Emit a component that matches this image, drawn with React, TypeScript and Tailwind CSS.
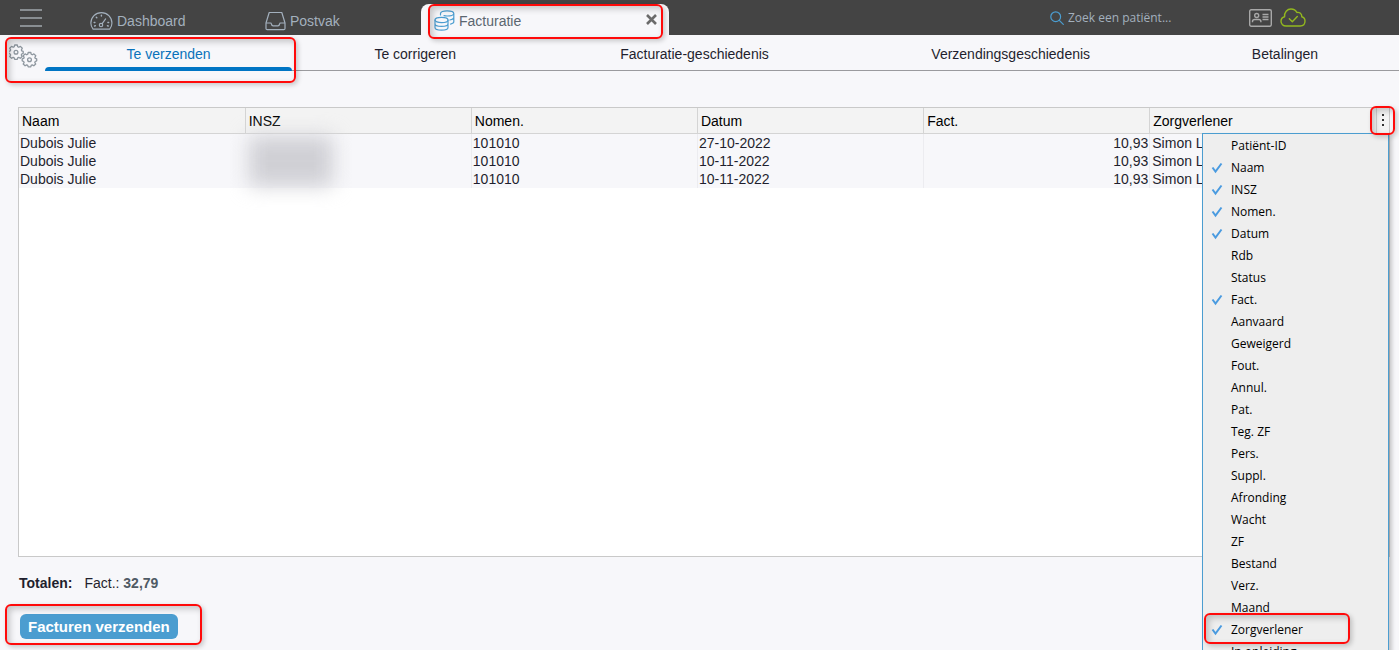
import React, { useState } from "react";

const COLUMNS = ["Naam", "INSZ", "Nomen.", "Datum", "Fact.", "Zorgverlener"];

const ROWS = [
  { naam: "Dubois Julie", nomen: "101010", datum: "27-10-2022", fact: "10,93", zorg: "Simon L" },
  { naam: "Dubois Julie", nomen: "101010", datum: "10-11-2022", fact: "10,93", zorg: "Simon L" },
  { naam: "Dubois Julie", nomen: "101010", datum: "10-11-2022", fact: "10,93", zorg: "Simon L" },
];

const MENU_ITEMS = [
  "Patiënt-ID", "Naam", "INSZ", "Nomen.", "Datum", "Rdb", "Status", "Fact.",
  "Aanvaard", "Geweigerd", "Fout.", "Annul.", "Pat.", "Teg. ZF", "Pers.",
  "Suppl.", "Afronding", "Wacht", "ZF", "Bestand", "Verz.", "Maand",
  "Zorgverlener", "In opleiding",
];

const SUB_TABS = [
  "Te verzenden", "Te corrigeren", "Facturatie-geschiedenis",
  "Verzendingsgeschiedenis", "Betalingen",
];

function Highlight({ className }: { className: string }) {
  return (
    <span
      aria-hidden="true"
      className={`pointer-events-none absolute z-30 rounded-md border-2 border-[#ff0a0a] shadow-[2px_2px_5px_rgba(0,0,0,0.2),inset_3px_3px_6px_rgba(0,0,0,0.2)] ${className}`}
    />
  );
}

function GaugeIcon() {
  return (
    <svg width="23" height="20" viewBox="0 0 24 20" fill="none" stroke="currentColor" strokeWidth="1.2" strokeLinecap="round" strokeLinejoin="round">
      <path d="M3.2 18.4C1.7 16.7.9 14.5.9 12.2.9 6.1 5.800 1.200 11.900 1.200S22.900 6.100 22.900 12.200c0 2.300-.8 4.500-2.300 6.200z" />
      <circle cx="11.500" cy="14.200" r="1.800" />
      <path d="M12.700 12.700 16.300 7.800" />
      <path strokeWidth="1.500" d="M11.900 4v.8M6.600 6.200l.5.5M4.300 11.500l.8.100M19.500 11.500l-.8.100M4.800 15.200l.8-.2M19 15.200l-.8-.2" />
    </svg>
  );
}

function TrayIcon() {
  return (
    <svg width="21" height="20" viewBox="0 0 21 20" fill="none" stroke="currentColor" strokeWidth="1.2" strokeLinejoin="round">
      <path d="M4.200 1.500h12.600l3.200 10.500v5.500q0 1.200-1.200 1.200H2.200Q1 18.700 1 17.500V12z" />
      <path d="M1 12h4.500q.8 0 .9.900.3 2 1.700 2h4.800q1.400 0 1.700-2 .1-.9.900-.9H20" />
    </svg>
  );
}

function CoinsIcon() {
  return (
    <svg width="21" height="21" viewBox="0 0 21 21" fill="none" stroke="currentColor" strokeWidth="1.2" strokeLinecap="round">
      <ellipse cx="7.500" cy="10" rx="6.500" ry="2.600" />
      <path d="M1 10v7.500c0 1.500 2.900 2.700 6.500 2.700S14 19 14 17.500V10M1 13.700c0 1.500 2.900 2.700 6.500 2.700s6.500-1.200 6.500-2.700" />
      <path d="M6.500 5V3.500C6.500 2 9.400.9 13 .9s6.800 1.100 6.800 2.600S16.800 6 13.200 6c-1.200 0-2.300-.1-3.200-.4M19.800 3.500v8.300c0 1-1.300 1.800-3.200 2.300M19.800 7.600c0 1.200-1.500 2-3.900 2.400" />
    </svg>
  );
}

function Gear({ x, y }: { x: number; y: number }) {
  return (
    <g transform={`translate(${x} ${y})`}>
      <path d="M-1.300-6.500h2.600l.4 1.700 1.100.6 1.600-.9 1.900 1.900-.9 1.600.4 1 1.400.5v1.900l-1.500.7-.4 1 .9 1.600-1.900 1.700-1.600-.9-1 .5-.4 1.500h-2.600l-.5-1.500-1-.5-1.600.9-1.900-1.700.9-1.600-.4-1-1.500-.7V-.1l1.500-.5.4-1-.9-1.600 1.900-1.900 1.600.9 1-.6z" />
      <circle r="1.900" cy=".7" />
    </g>
  );
}

function GearsIcon() {
  return (
    <svg width="29" height="24" viewBox="0 0 29 24" fill="none" stroke="currentColor" strokeWidth="1.3" strokeLinejoin="round">
      <Gear x={7} y={7.5} />
      <Gear x={20.5} y={15} />
    </svg>
  );
}

function CardIcon() {
  return (
    <svg width="23" height="18" viewBox="0 0 23 18" fill="none" stroke="currentColor" strokeWidth="1.4">
      <rect x=".7" y=".7" width="21.600" height="16.600" rx="1.500" />
      <circle cx="7.700" cy="6.500" r="2" />
      <path d="M3.500 13.200v-.7q0-2 2.200-2h4q2.200 0 2.200 2v.7M13.500 5.500h6M13.500 8h6M13.500 10.500h6" />
    </svg>
  );
}

function CloudIcon() {
  return (
    <svg width="26" height="19" viewBox="0 0 26 19" fill="none" stroke="currentColor" strokeWidth="1.4" strokeLinecap="round" strokeLinejoin="round">
      <path d="M6 18C3.200 18 1 16 1 13.300c0-2.300 1.500-4 3.600-4.500C4.100 4.300 7.200 1 11 1c2.700 0 4.800 1.300 5.900 3.500 2.700-.6 5 1.200 4.900 4.200 2 .5 3.200 2.200 3.200 4.300C25 16 23 18 20.200 18z" />
      <path d="m9.300 10.700 3 3 5-5.200" />
    </svg>
  );
}

export default function App() {
  const [checked, setChecked] = useState<string[]>(COLUMNS);
  const toggle = (name: string) =>
    setChecked((c) => (c.includes(name) ? c.filter((n) => n !== name) : [...c, name]));

  return (
    <div className="relative flex h-screen flex-col overflow-hidden bg-[#f7f7fa] font-['Liberation_Sans',Arial,sans-serif] text-sm text-[#1f1f2e]">
      <header className="flex h-[35px] shrink-0 items-stretch bg-[#444444] text-[#a3b0bd]">
        <button aria-label="Menu" className="flex w-[90px] items-center pl-5">
          <svg width="22" height="18" viewBox="0 0 22 18" stroke="#a0a6ac" strokeWidth="1.4">
            <path d="M0 1h22M0 9h22M0 17h22" />
          </svg>
        </button>
        <nav className="flex items-stretch">
          <a href="#dashboard" className="flex w-[175px] items-center gap-1 pt-1.5">
            <GaugeIcon />
            Dashboard
          </a>
          <a href="#postvak" className="flex w-[156px] items-center gap-1 pt-1.5">
            <TrayIcon />
            Postvak
          </a>
          <div className="relative mt-1 flex w-[248px] items-center justify-between rounded-t-lg bg-[#f7f7fa] pr-3 pl-[13px] text-[#5b6670]">
            <a href="#facturatie" className="flex items-center gap-1 pt-0.5">
              <span className="text-[#4b9dd0]"><CoinsIcon /></span>
              Facturatie
            </a>
            <button aria-label="Sluiten">
              <svg width="11" height="11" viewBox="0 0 11 11" stroke="#6b6b6b" strokeWidth="2.6">
                <path d="m1 1 9 9M10 1l-9 9" />
              </svg>
            </button>
            <Highlight className="top-0 right-1.5 -bottom-1 left-[7px]" />
          </div>
        </nav>
        <div className="flex flex-1 items-center justify-end pr-[93px]">
          <label className="mr-10 flex w-[159px] items-center gap-1">
            <svg width="14" height="14" viewBox="0 0 14 14" fill="none" stroke="#4b9dd0" strokeWidth="1.2" strokeLinecap="round" className="shrink-0">
              <circle cx="5.700" cy="5.700" r="4.900" />
              <path d="m9.300 9.300 4 4" />
            </svg>
            <input
              type="text"
              aria-label="Zoek een patiënt"
              placeholder="Zoek een patiënt..."
              className="w-full min-w-0 bg-transparent font-['Open_Sans',sans-serif] text-xs outline-none placeholder:text-[#a3b0bd]"
            />
          </label>
          <button aria-label="Kaartlezer" className="mr-2 text-[#a8a8a8]"><CardIcon /></button>
          <button aria-label="Verbonden" className="text-[#93b81f]"><CloudIcon /></button>
        </div>
      </header>

      <nav className="relative flex h-9 shrink-0 items-stretch">
        <button aria-label="Instellingen" className="flex w-[45px] shrink-0 items-center pt-1.5 pl-[9px] text-[#8e979f]">
          <GearsIcon />
        </button>
        <div className="grid flex-1 grid-cols-[247fr_246fr_312fr_320fr_228fr]">
          {SUB_TABS.map((tab, i) => (
            <a
              key={tab}
              href={`#tab-${i}`}
              className={
                i === 0
                  ? "relative flex items-center justify-center pt-0.5 text-[#0a72bb]"
                  : "flex items-center justify-center border-b border-[#9a9a9e] pt-0.5"
              }
            >
              {tab}
              {i === 0 && <span className="absolute inset-x-0 bottom-0 h-1 rounded-t bg-[#0075c4]" />}
            </a>
          ))}
        </div>
        <Highlight className="top-0.5 left-[5px] h-[46px] w-[291px]" />
      </nav>

      <main className="flex min-h-0 flex-1 flex-col pt-9 pr-[9px] pl-[18px]">
        <div className="relative flex-1 border border-[#c9c9c9] bg-white">
          <table className="w-full table-fixed border-collapse leading-[18px]">
            <colgroup>
              {COLUMNS.map((c) => <col key={c} />)}
              <col className="w-[13px]" />
            </colgroup>
            <thead>
              <tr className="h-[25px] border-b border-[#d4d4d4] bg-[#f3f3f3] text-black">
                {COLUMNS.map((c) => (
                  <th key={c} className="border-r border-[#d4d4d4] p-0 pt-0.5 pl-[3px] text-left font-normal">{c}</th>
                ))}
                <th className="p-0">
                  <button aria-label="Kolommen kiezen" className="flex h-6 w-full items-center justify-center">
                    <svg width="2" height="12" viewBox="0 0 2 12" fill="#333">
                      <path d="M0 0h2v2H0zM0 5h2v2H0zM0 10h2v2H0z" />
                    </svg>
                  </button>
                </th>
              </tr>
            </thead>
            <tbody>
              {ROWS.map((r, i) => (
                <tr key={i} className="bg-[#f7f7fa]">
                  <td className="p-0 pl-px">{r.naam}</td>
                  <td className="relative border-r border-[#ececf0] p-0">
                    {i === 1 && (
                      <span className="absolute -top-4 left-1 h-[50px] w-[84px] bg-[#d0d0d5] blur-[10px]" />
                    )}
                  </td>
                  <td className="border-r border-[#ececf0] p-0 pl-px">{r.nomen}</td>
                  <td className="border-r border-[#ececf0] p-0 pl-px">{r.datum}</td>
                  <td className="border-r border-[#ececf0] p-0 pr-px text-right">{r.fact}</td>
                  <td className="p-0 pl-0.5">{r.zorg}</td>
                  <td className="p-0" />
                </tr>
              ))}
            </tbody>
          </table>
          <Highlight className="-top-0.5 -right-1.5 h-[29px] w-[25px]" />
          <div className="absolute top-[25px] right-0 z-20 w-[187px] border border-[#4b9dd0] bg-[#eeeeee] pt-px font-['Open_Sans',sans-serif] text-xs text-black shadow-[3px_3px_4px_rgba(0,0,0,0.2)]">
            {MENU_ITEMS.map((name) => (
              <label key={name} className="relative flex h-[22px] items-center pl-2">
                <input
                  type="checkbox"
                  checked={checked.includes(name)}
                  onChange={() => toggle(name)}
                  className="peer size-3 appearance-none"
                />
                <svg width="12" height="12" viewBox="0 0 12 12" fill="none" stroke="#4a9be0" strokeWidth="2" className="invisible -ml-3 peer-checked:visible">
                  <path d="m1.500 5.500 3 4 6-8" />
                </svg>
                <span className="ml-2">{name}</span>
                {name === "Zorgverlener" && <Highlight className="-top-1.5 left-px h-[31px] w-[146px]" />}
              </label>
            ))}
          </div>
        </div>

        <footer className="flex flex-col items-start pt-[17px] pb-[11px]">
          <p className="flex gap-3 pl-px leading-[18px]">
            <b>Totalen:</b>
            <span>Fact.: <b className="text-[#4f5a64]">32,79</b></span>
          </p>
          <div className="relative mt-[22px] ml-0.5">
            <button className="h-[25px] rounded-md bg-[#4b9dd0] px-2 text-[15px] font-bold text-white">
              Facturen verzenden
            </button>
            <Highlight className="-top-2.5 -right-6 -bottom-1.5 -left-[15px]" />
          </div>
        </footer>
      </main>
    </div>
  );
}
